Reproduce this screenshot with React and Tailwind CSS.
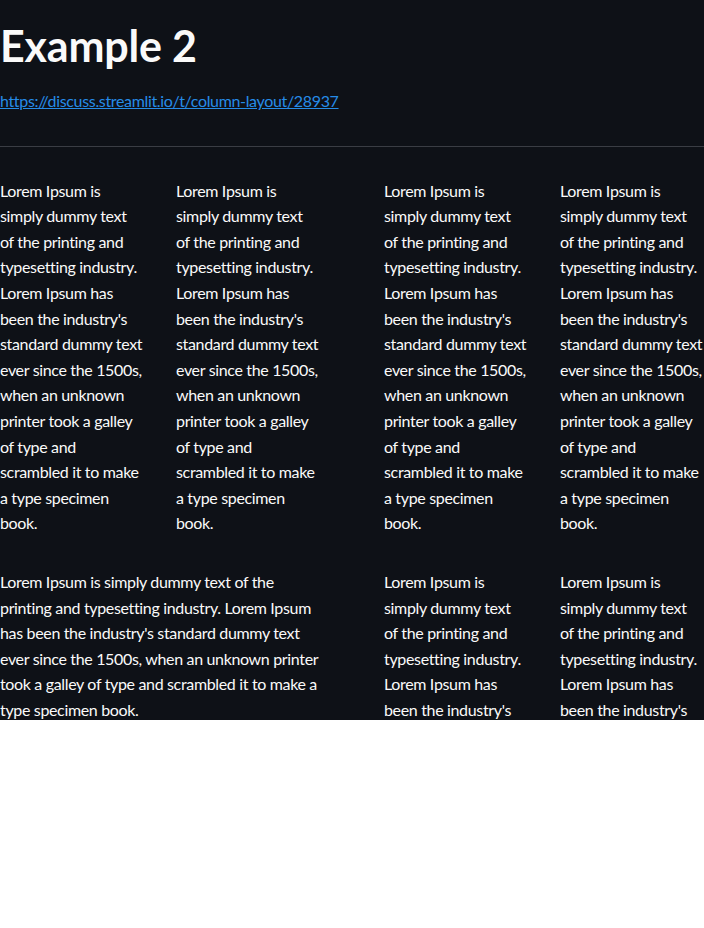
import React from "react";

const narrow = [
  "Lorem Ipsum is",
  "simply dummy text",
  "of the printing and",
  "typesetting industry.",
  "Lorem Ipsum has",
  "been the industry's",
  "standard dummy text",
  "ever since the 1500s,",
  "when an unknown",
  "printer took a galley",
  "of type and",
  "scrambled it to make",
  "a type specimen",
  "book.",
];

const wide = [
  "Lorem Ipsum is simply dummy text of the",
  "printing and typesetting industry. Lorem Ipsum",
  "has been the industry's standard dummy text",
  "ever since the 1500s, when an unknown printer",
  "took a galley of type and scrambled it to make a",
  "type specimen book.",
];

const Para = ({ lines }) => (
  <p className="text-[16px] leading-[25.6px] tracking-[-0.34px] whitespace-nowrap">
    {lines.map((l, i) => (
      <span key={i} className="block">
        {l}
      </span>
    ))}
  </p>
);

export default function App() {
  return (
    <div
      className="h-[720px] overflow-hidden bg-[#0e1117] text-[#fafafa]"
      style={{ fontFamily: "Lato, 'Noto Sans', sans-serif" }}
    >
      <h1 className="pt-[21px] text-[43px] leading-[50px] font-bold tracking-[-0.2px]">
        Example 2
      </h1>
      <p className="mt-[17px] text-[16px] leading-[25.6px] tracking-[-0.34px]">
        <a href="#" className="text-[#268ce8] underline">
          https://discuss.streamlit.io/t/column-layout/28937
        </a>
      </p>
      <div className="mt-[32px] h-px bg-[#3a3d44]" />
      <div className="mt-[31px] flex flex-col gap-[33px]">
        <div className="grid grid-cols-2 gap-x-16">
          <div className="grid grid-cols-2 gap-x-8">
            <Para lines={narrow} />
            <Para lines={narrow} />
          </div>
          <div className="grid grid-cols-2 gap-x-8">
            <Para lines={narrow} />
            <Para lines={narrow} />
          </div>
        </div>
        <div className="grid grid-cols-2 gap-x-16">
          <Para lines={wide} />
          <div className="grid grid-cols-2 gap-x-8">
            <Para lines={narrow} />
            <Para lines={narrow} />
          </div>
        </div>
      </div>
    </div>
  );
}
